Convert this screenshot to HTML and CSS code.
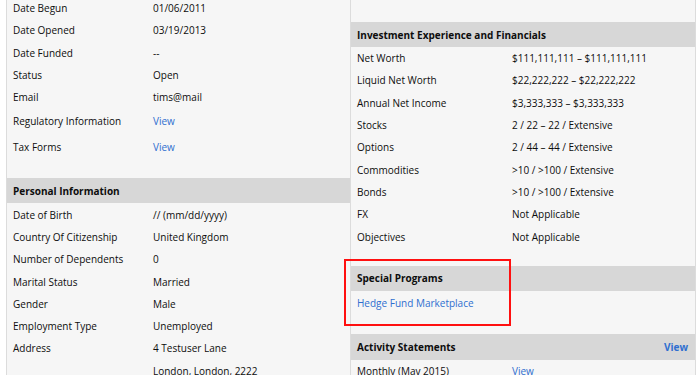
FILE: index.html
```
<html>
	<head>
		<meta charset="utf-8">
		<meta name="viewport" content="width=device-width">
		<link rel="stylesheet" href="styles.css">
	</head>
	<body>
		<div class="pagina">
			<div class="colonna sinistra">
				<div class="sezione">
					<div class="riga primo"><span class="etichetta">Date Begun</span><span>01/06/2011</span></div>
					<div class="riga"><span class="etichetta">Date Opened</span><span>03/19/2013</span></div>
					<div class="riga"><span class="etichetta">Date Funded</span><span>--</span></div>
					<div class="riga"><span class="etichetta">Status</span><span>Open</span></div>
					<div class="riga"><span class="etichetta">Email</span><span>tims@mail</span></div>
					<div class="riga alta"><span class="etichetta">Regulatory Information</span><a href="#">View</a></div>
					<div class="riga altissima"><span class="etichetta">Tax Forms</span><a href="#">View</a></div>
				</div>
				<div class="sezione">
					<div class="titolo">Personal Information</div>
					<div class="riga"><span class="etichetta">Date of Birth</span><span>// (mm/dd/yyyy)</span></div>
					<div class="riga"><span class="etichetta">Country Of Citizenship</span><span>United Kingdom</span></div>
					<div class="riga"><span class="etichetta">Number of Dependents</span><span>0</span></div>
					<div class="riga"><span class="etichetta">Marital Status</span><span>Married</span></div>
					<div class="riga"><span class="etichetta">Gender</span><span>Male</span></div>
					<div class="riga"><span class="etichetta">Employment Type</span><span>Unemployed</span></div>
					<div class="riga"><span class="etichetta">Address</span><span>4 Testuser Lane</span></div>
					<div class="riga"><span class="etichetta"></span><span>London, London, 2222</span></div>
				</div>
			</div>
			<div class="colonna destra">
				<div class="vuoto"></div>
				<div class="sezione">
					<div class="titolo">Investment Experience and Financials</div>
					<div class="riga"><span class="etichetta">Net Worth</span><span>$111,111,111 &ndash; $111,111,111</span></div>
					<div class="riga"><span class="etichetta">Liquid Net Worth</span><span>$22,222,222 &ndash; $22,222,222</span></div>
					<div class="riga"><span class="etichetta">Annual Net Income</span><span>$3,333,333 &ndash; $3,333,333</span></div>
					<div class="riga"><span class="etichetta">Stocks</span><span>2 / 22 &ndash; 22 / Extensive</span></div>
					<div class="riga"><span class="etichetta">Options</span><span>2 / 44 &ndash; 44 / Extensive</span></div>
					<div class="riga"><span class="etichetta">Commodities</span><span>&gt;10 / &gt;100 / Extensive</span></div>
					<div class="riga"><span class="etichetta">Bonds</span><span>&gt;10 / &gt;100 / Extensive</span></div>
					<div class="riga"><span class="etichetta">FX</span><span>Not Applicable</span></div>
					<div class="riga"><span class="etichetta">Objectives</span><span>Not Applicable</span></div>
				</div>
				<div class="sezione speciale">
					<div class="titolo">Special Programs</div>
					<div class="riga alta"><a href="#">Hedge Fund Marketplace</a></div>
					<div class="evidenziato"></div>
				</div>
				<div class="sezione">
					<div class="titolo alto"><span>Activity Statements</span><a href="#">View</a></div>
					<div class="riga"><span class="etichetta">Monthly (May 2015)</span><a href="#">View</a></div>
				</div>
			</div>
		</div>
	</body>
</html>
```
FILE: styles.css
```
body {
	margin: 0;
	background-color: #ffffff;
	font-family: "Open Sans", "Liberation Sans", sans-serif;
	font-size: 10px;
	color: #0d0d0d;
	overflow: hidden;
}

a {
	color: #2f6fd0;
	text-decoration: none;
}

.pagina {
	display: flex;
	padding-left: 6px;
	margin-top: -3px;
	height: 400px;
}

.colonna {
	background-color: #f6f6f6;
	border-left: 1px solid #dcdcdc;
}

.sinistra {
	width: 343px;
}

.destra {
	width: 344px;
	border-right: 1px solid #dcdcdc;
}

.vuoto {
	height: 25px;
}

.sezione {
	padding-bottom: 18px;
}

.titolo {
	display: flex;
	justify-content: space-between;
	align-items: center;
	height: 25px;
	padding: 0 7px 0 6px;
	background-color: #d7d7d7;
	font-weight: bold;
}

.titolo.alto {
	height: 26px;
}

.riga {
	display: flex;
	align-items: center;
	height: 22.3px;
	padding-left: 6px;
}

.riga.alta {
	height: 25px;
}

.riga.altissima {
	height: 27px;
}

.etichetta {
	width: 140px;
	flex-shrink: 0;
}

.destra .etichetta {
	width: 155px;
}

.speciale {
	position: relative;
	padding-bottom: 18px;
}

.evidenziato {
	position: absolute;
	left: -7px;
	top: -7px;
	width: 163px;
	height: 63px;
	border: 2px solid #ff1010;
}
```
